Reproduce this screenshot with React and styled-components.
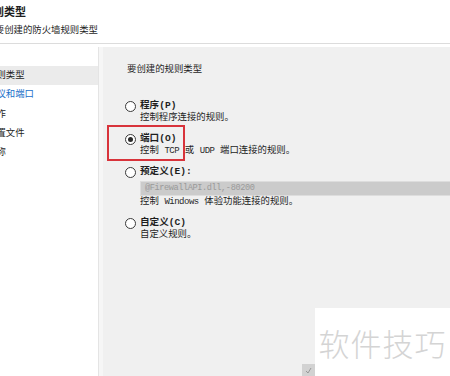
import React from "react";
import styled, { createGlobalStyle } from "styled-components";

const GlobalStyle = createGlobalStyle`
  body {
    margin: 0;
    background: #f0f0f0;
    font-family: "Liberation Mono", "Noto Sans CJK SC", monospace;
    color: #1e1e1e;
    overflow: hidden;
  }
`;

const Page = styled.div`
  position: relative;
  width: 450px;
  height: 376px;
  display: flex;
  flex-direction: column;
  overflow: hidden;
`;

const Header = styled.div`
  height: 44px;
  background: #fff;
  border-bottom: 1px solid #dcdcdc;
  box-sizing: border-box;
  padding-top: 4px;
  display: flex;
  flex-direction: column;
`;

const Title = styled.div`
  font-family: "Noto Sans CJK SC", sans-serif;
  font-size: 11px;
  font-weight: bold;
  line-height: 15px;
  margin-left: -18px;
  white-space: nowrap;
`;

const Subtitle = styled.div`
  font-size: 9.4px;
  line-height: 12px;
  margin-top: 6px;
  margin-left: -24px;
  white-space: nowrap;
`;

const Body = styled.div`
  flex: 1;
  display: flex;
  border-top: 3px solid #fff;
`;

const Sidebar = styled.div`
  width: 98px;
  background: #fff;
  border-right: 1px solid #e4e4e4;
  padding-top: 19px;
  display: flex;
  flex-direction: column;
`;

const NavItem = styled.div`
  height: 19.3px;
  line-height: 19.3px;
  font-size: 9.4px;
  text-indent: -13px;
  white-space: nowrap;
  overflow: hidden;
  background: ${(p) => (p.$active ? "#ebebeb" : "transparent")};
  color: ${(p) => (p.$link ? "#1a6fc9" : "#1e1e1e")};
`;

const Gutter = styled.div`
  width: 4px;
  background: #f6f6f6;
`;

const Main = styled.div`
  flex: 1;
  padding: 17px 0 0 22px;
  display: flex;
  flex-direction: column;
  overflow: hidden;
`;

const Prompt = styled.div`
  font-size: 9.4px;
  line-height: 12px;
  margin-left: 2px;
  white-space: nowrap;
`;

const Options = styled.div`
  margin-top: 24px;
  display: flex;
  flex-direction: column;
  gap: 9px;
`;

const Option = styled.div`
  position: relative;
  display: grid;
  grid-template-columns: 15px 1fr;
  align-items: center;
`;

const Radio = styled.span`
  width: 11px;
  height: 11px;
  box-sizing: border-box;
  border: 1px solid #3a3a3a;
  border-radius: 50%;
  background: #fff;
  display: flex;
  align-items: center;
  justify-content: center;
  &::after {
    content: "";
    width: 5px;
    height: 5px;
    border-radius: 50%;
    background: ${(p) => (p.$checked ? "#2a2a2a" : "transparent")};
  }
`;

const Label = styled.div`
  font-size: 9.6px;
  font-weight: bold;
  line-height: 12px;
  white-space: nowrap;
`;

const Desc = styled.div`
  grid-column: 2;
  font-size: 9.4px;
  line-height: 12px;
  white-space: nowrap;
`;

const Latin = styled.span`
  font-size: 9px;
  letter-spacing: -0.5px;
  color: #2a2a2a;
`;

const Field = styled.div`
  grid-column: 2;
  margin-top: 3px;
  height: 15px;
  box-sizing: border-box;
  width: 320px;
  background: #cbcbcb;
  border: 1px solid #dddddd;
  color: #9a9a9a;
  font-size: 8.6px;
  letter-spacing: -0.4px;
  line-height: 13px;
  padding-left: 4px;
  white-space: nowrap;
`;

const Highlight = styled.div`
  position: absolute;
  left: -18px;
  top: -8px;
  width: 78px;
  height: 36px;
  box-sizing: border-box;
  border: 2px solid #d8333b;
  pointer-events: none;
`;

const Watermark = styled.div`
  position: absolute;
  right: 0;
  bottom: 0;
  width: 135px;
  height: 68px;
  background: #fff;
  display: flex;
  align-items: center;
  justify-content: center;
  font-family: "Noto Sans CJK SC", sans-serif;
  font-size: 31px;
  font-weight: 300;
  letter-spacing: 1px;
  color: #d4d4d4;
`;

const Grip = styled.div`
  position: absolute;
  left: -13px;
  bottom: 0;
  width: 13px;
  height: 12px;
  background: #d2d2d2;
  display: flex;
  align-items: center;
  justify-content: center;
`;

const navItems = [
  { text: "规则类型", active: true },
  { text: "协议和端口", link: true },
  { text: "操作" },
  { text: "配置文件" },
  { text: "名称" },
];

export default function App() {
  return (
    <>
      <GlobalStyle />
      <Page>
        <Header>
          <Title>规则类型</Title>
          <Subtitle>指定要创建的防火墙规则类型</Subtitle>
        </Header>
        <Body>
          <Sidebar>
            {navItems.map((n) => (
              <NavItem key={n.text} $active={n.active} $link={n.link}>
                {n.text}
              </NavItem>
            ))}
          </Sidebar>
          <Gutter />
          <Main>
            <Prompt>要创建的规则类型</Prompt>
            <Options>
              <Option>
                <Radio />
                <Label>程序(P)</Label>
                <Desc>控制程序连接的规则。</Desc>
              </Option>
              <Option>
                <Highlight />
                <Radio $checked />
                <Label>端口(O)</Label>
                <Desc>
                  控制 <Latin>TCP</Latin> 或 <Latin>UDP</Latin> 端口连接的规则。
                </Desc>
              </Option>
              <Option>
                <Radio />
                <Label>预定义(E):</Label>
                <Field>@FirewallAPI.dll,-80200</Field>
                <Desc>
                  控制 <Latin>Windows</Latin> 体验功能连接的规则。
                </Desc>
              </Option>
              <Option>
                <Radio />
                <Label>自定义(C)</Label>
                <Desc>自定义规则。</Desc>
              </Option>
            </Options>
          </Main>
        </Body>
        <Watermark>
          <Grip>
            <svg width="7" height="7" viewBox="0 0 7 7">
              <path d="M1 4 L3 6 L6 1" stroke="#8a8a8a" strokeWidth="0.8" fill="none" />
            </svg>
          </Grip>
          软件技巧
        </Watermark>
      </Page>
    </>
  );
}
